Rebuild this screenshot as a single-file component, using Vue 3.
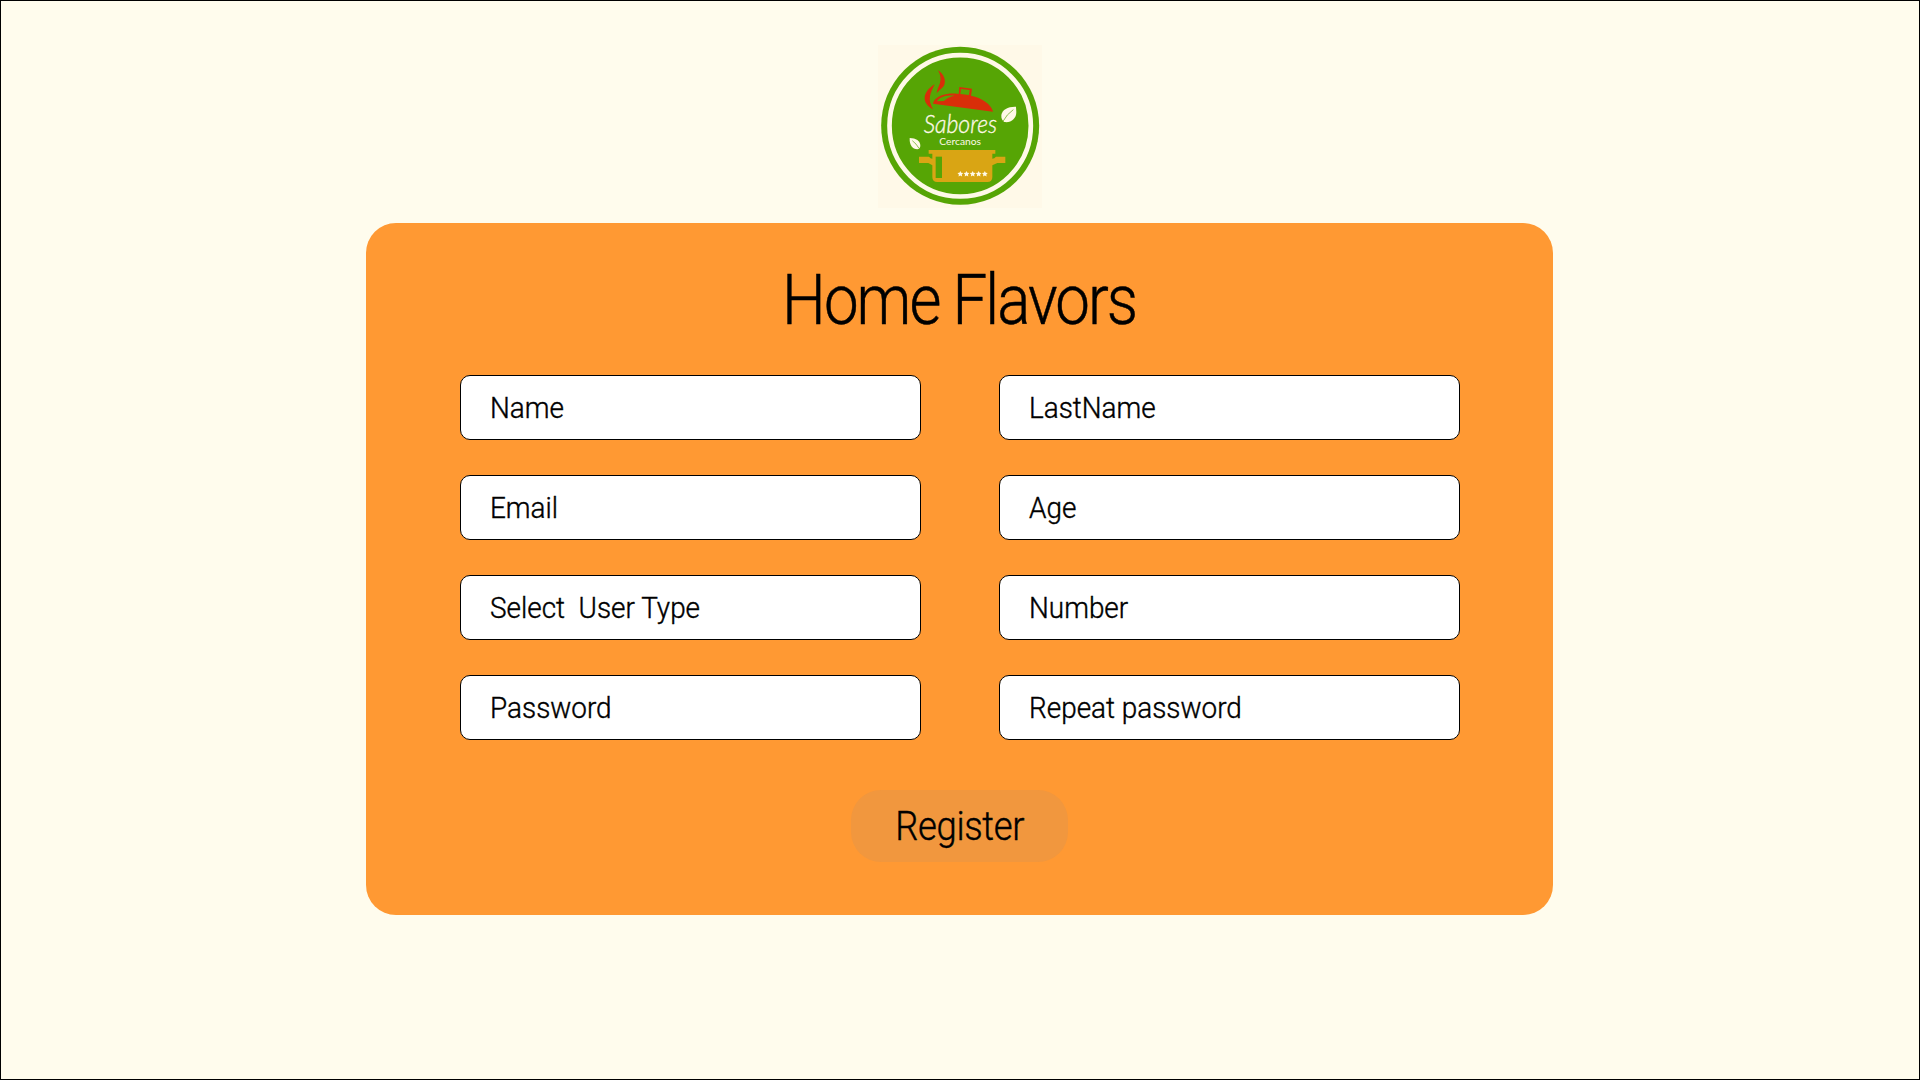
<script setup>
const fields = [
  'Name', 'LastName',
  'Email', 'Age',
  'Select\u00a0 User Type', 'Number',
  'Password', 'Repeat password',
]
const stars = [271, 289.5, 308, 326, 344.5]
</script>

<template>
  <main class="page">
    <svg class="logo" viewBox="24 27 492 489" role="img" aria-label="Sabores Cercanos">
      <rect x="24" y="27" width="492" height="489" fill="#fff9e8" />
      <circle cx="270.500" cy="269.500" r="237" fill="#56a505" />
      <circle cx="270.500" cy="269.500" r="212" fill="none" stroke="#fff9e8" stroke-width="14" />
      <g fill="#d92e09">
        <path d="M204 103C222 115 228 132 223 146C218 158 206 162 200 172C201 160 207 151 210 141C214 127 211 115 204 103Z" />
        <path d="M194 145C179 154 163 170 164 188C165 204 178 213 189 220C182 207 177 194 180 181C182 168 188 158 194 145Z" />
        <path fill-rule="evenodd" d="M189 203C191 189 209 177 232 174C244 172 255 173 266 174L268 153L306 158L303 179C335 186 363 203 369 227ZM273 159L271 174L297 177L299 162ZM201 196L222 195C229 187 240 181 254 179C229 177 208 183 201 196Z" />
      </g>
      <text class="brand" x="161" y="290" textLength="220" lengthAdjust="spacingAndGlyphs">Sabores</text>
      <text class="sub" x="208" y="326" textLength="125" lengthAdjust="spacingAndGlyphs">Cercanos</text>
      <g fill="#fff9e8">
        <path d="M438 212C415 211 397 220 394 237C393 247 397 254 403 258C423 261 439 248 439 228Z" />
        <path d="M119 306C138 306 151 315 151 329C151 335 147 339 142 340C127 339 118 327 119 306Z" />
      </g>
      <g fill="none" stroke="#56a505" stroke-width="2">
        <path d="M399 256Q410 235 430 221" />
        <path d="M147 337Q139 323 127 314" />
      </g>
      <path fill="#d9a514" d="M176 342H376V353H367V368Q373 368 378 362H406V381H382L367 388V423Q367 438 352 438H202Q187 438 187 423V388L175 381H147V362H177Q181 368 187 368V353H176Z" />
      <rect x="197" y="362" width="19" height="64" fill="#56a505" />
      <path
        v-for="x in stars"
        :key="x"
        :transform="`translate(${x} 414)`"
        fill="#fffae9"
        d="M0-9L2.700-3.500L8.600-2.800L4.300 1.500L5.400 7.500L0 4.500L-5.400 7.500L-4.300 1.500L-8.600-2.800L-2.700-3.500Z"
      />
    </svg>

    <form class="card" @submit.prevent>
      <h1 class="title">Home Flavors</h1>
      <div class="fields">
        <div v-for="label in fields" :key="label" class="field">
          <span class="label">{{ label }}</span>
        </div>
      </div>
      <button class="register" type="submit"><span class="caption">Register</span></button>
    </form>
  </main>
</template>

<style>
body {
  margin: 0;
}
</style>

<style scoped>
.page {
  box-sizing: border-box;
  width: 1920px;
  height: 1080px;
  padding-top: 44px;
  border: 1px solid #000;
  background: #fffced;
  display: flex;
  flex-direction: column;
  align-items: center;
  font-family: Roboto, "Liberation Sans", sans-serif;
  font-weight: 300;
  color: #000;
}
.logo {
  width: 164px;
  height: 163px;
  flex: none;
}
.brand {
  font: italic 300 75px Lato, sans-serif;
  fill: #fff9e8;
  stroke: #fff9e8;
  stroke-width: 1px;
}
.sub {
  font: 400 29px Lato, sans-serif;
  fill: #fff9e8;
}
.card {
  box-sizing: border-box;
  width: 1187px;
  height: 692px;
  margin: 15px 1px 0 0;
  padding-top: 37px;
  border-radius: 30px;
  background: #ff9933;
  display: flex;
  flex-direction: column;
  align-items: center;
}
.title {
  margin: 0;
  font-size: 69.5px;
  line-height: 82px;
  font-weight: 300;
  letter-spacing: -2.2px;
  -webkit-text-stroke: 0.5px #000;
  white-space: nowrap;
  transform: scaleX(0.889);
}
.fields {
  display: grid;
  grid-template-columns: 461px 461px;
  grid-auto-rows: 65px;
  column-gap: 78px;
  row-gap: 35px;
  margin: 33px 0 0 1px;
}
.field {
  box-sizing: border-box;
  padding-left: 29px;
  border: 1px solid #000;
  border-radius: 10px;
  background: #fff;
  font-size: 30px;
  line-height: 63px;
}
.label {
  display: inline-block;
  white-space: pre;
  -webkit-text-stroke: 0.4px #000;
  transform: scaleX(0.93);
  transform-origin: left;
}
.register {
  width: 217px;
  height: 72px;
  margin: 50px 0 0;
  padding: 2px 0 0;
  border: 0;
  border-radius: 30px;
  background: #f1973e;
  color: inherit;
  font: inherit;
  font-size: 40px;
  line-height: 70px;
}
.caption {
  display: inline-block;
  letter-spacing: -0.4px;
  -webkit-text-stroke: 0.4px #000;
  transform: scaleX(0.91);
}
</style>
